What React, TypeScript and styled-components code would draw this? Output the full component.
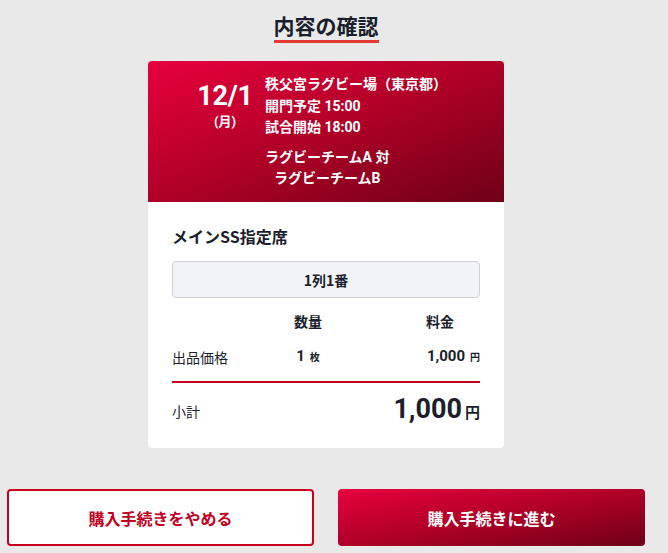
import React from "react";
import styled, { createGlobalStyle } from "styled-components";

const Global = createGlobalStyle`
  html, body { margin: 0; padding: 0; background: #e9e9e9; }
  body { font-family: "Noto Sans CJK JP", "Noto Sans", sans-serif; color: #1b1e2c; }
  * { box-sizing: border-box; }
`;

const Page = styled.div`
  width: 652px;
  padding: 11px 7px 0;
  display: flex;
  flex-direction: column;
  align-items: center;
`;

const Title = styled.h1`
  margin: 0;
  font-size: 21px;
  line-height: 28px;
  font-weight: 700;
  color: #1b1e2c;
  padding-bottom: 1px;
  border-bottom: 3px solid #e53935;
`;

const Card = styled.section`
  margin-top: 18px;
  width: 356px;
  background: #fff;
  border-radius: 4px;
  overflow: hidden;
`;

const Header = styled.div`
  background: linear-gradient(to bottom right, #e8003e 0%, #b00028 50%, #6e0017 100%);
  color: #fff;
  display: flex;
  align-items: flex-start;
  gap: 13px;
  padding: 13px 0 13px 50px;
  height: 141px;
`;

const DateCol = styled.div`
  width: 54px;
  margin-top: 7px;
  display: flex;
  flex-direction: column;
  align-items: center;
  font-family: Roboto, "Noto Sans CJK JP", sans-serif;
  font-weight: 700;
`;

const DateMain = styled.div`
  font-size: 27px;
  line-height: 30px;
  letter-spacing: -0.3px;
`;

const DateDay = styled.div`
  font-size: 13px;
  line-height: 18px;
  margin-top: 2px;
`;

const Info = styled.div`
  display: flex;
  flex-direction: column;
  align-items: flex-start;
  font-family: Roboto, "Noto Sans CJK JP", sans-serif;
  font-weight: 700;
  font-size: 14px;
  line-height: 21.5px;
`;

const Teams = styled.div`
  margin-top: 8px;
  text-align: center;
`;

const Body = styled.div`
  padding: 22px 24px 20px;
`;

const SeatName = styled.h2`
  margin: 0;
  font-size: 16px;
  line-height: 24px;
  font-weight: 700;
`;

const SeatBox = styled.div`
  margin-top: 13px;
  height: 37px;
  border: 1px solid #cfd1d6;
  border-radius: 4px;
  background: #f2f3f8;
  display: flex;
  align-items: center;
  justify-content: center;
  font-size: 14px;
  font-weight: 700;
`;

const Grid = styled.div`
  display: grid;
  grid-template-columns: 96px 80px 1fr;
  align-items: center;
`;

const HeadCell = styled.div<{ $align: "center" | "right" }>`
  font-size: 14px;
  font-weight: 700;
  line-height: 20px;
  text-align: ${(p) => p.$align};
  padding-right: ${(p) => (p.$align === "right" ? "26px" : "0")};
  padding-top: 13px;
`;

const Label = styled.div`
  font-size: 14px;
  line-height: 20px;
  padding-top: 15px;
  padding-bottom: 13px;
`;

const Value = styled.div<{ $align: "center" | "right" }>`
  font-family: Roboto, "Noto Sans CJK JP", sans-serif;
  font-weight: 700;
  font-size: 15px;
  line-height: 20px;
  text-align: ${(p) => p.$align};
  padding-top: 15px;
  padding-bottom: 13px;
`;

const Unit = styled.span`
  font-size: 10px;
  margin-left: 5px;
`;

const Divider = styled.hr`
  margin: 0;
  border: none;
  height: 2px;
  background: #c2001f;
`;

const Total = styled.div`
  display: flex;
  align-items: center;
  justify-content: space-between;
  padding-top: 11px;
`;

const TotalLabel = styled.div`
  font-size: 14px;
  line-height: 30px;
`;

const TotalValue = styled.div`
  font-family: Roboto, "Noto Sans CJK JP", sans-serif;
  font-weight: 700;
  font-size: 27px;
  line-height: 30px;
`;

const TotalUnit = styled.span`
  font-size: 15px;
  margin-left: 3px;
`;

const Buttons = styled.div`
  margin-top: 41px;
  width: 100%;
  display: grid;
  grid-template-columns: 1fr 1fr;
  gap: 24px;
`;

const Button = styled.button<{ $primary?: boolean }>`
  height: 57px;
  border-radius: 4px;
  font-family: "Noto Sans CJK JP", sans-serif;
  font-size: 16px;
  font-weight: 700;
  cursor: pointer;
  border: ${(p) => (p.$primary ? "none" : "2px solid #c8001e")};
  background: ${(p) =>
    p.$primary
      ? "linear-gradient(to bottom right, #e8003e 0%, #b00028 50%, #6e0017 100%)"
      : "#fff"};
  color: ${(p) => (p.$primary ? "#fff" : "#c0001e")};
`;

export default function App() {
  return (
    <>
      <Global />
      <Page>
        <Title>内容の確認</Title>
        <Card>
          <Header>
            <DateCol>
              <DateMain>12/1</DateMain>
              <DateDay>(月)</DateDay>
            </DateCol>
            <Info>
              <div>秩父宮ラグビー場（東京都）</div>
              <div>開門予定 15:00</div>
              <div>試合開始 18:00</div>
              <Teams>
                ラグビーチームA 対
                <br />
                ラグビーチームB
              </Teams>
            </Info>
          </Header>
          <Body>
            <SeatName>メインSS指定席</SeatName>
            <SeatBox>1列1番</SeatBox>
            <Grid>
              <div />
              <HeadCell $align="center">数量</HeadCell>
              <HeadCell $align="right">料金</HeadCell>
              <Label>出品価格</Label>
              <Value $align="center">
                1<Unit>枚</Unit>
              </Value>
              <Value $align="right">
                1,000<Unit>円</Unit>
              </Value>
            </Grid>
            <Divider />
            <Total>
              <TotalLabel>小計</TotalLabel>
              <TotalValue>
                1,000<TotalUnit>円</TotalUnit>
              </TotalValue>
            </Total>
          </Body>
        </Card>
        <Buttons>
          <Button>購入手続きをやめる</Button>
          <Button $primary>購入手続きに進む</Button>
        </Buttons>
      </Page>
    </>
  );
}
